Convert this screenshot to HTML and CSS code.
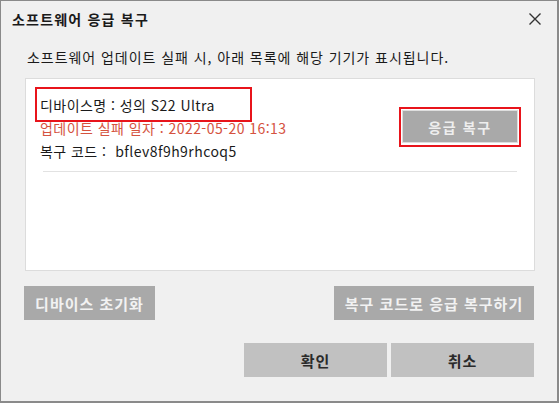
FILE: index.html
```html
<!DOCTYPE html>
<html lang="ko">
<head>
<meta charset="utf-8">
<link rel="stylesheet" href="styles.css">
</head>
<body>
<div class="window">
  <div class="titlebar">
    <span class="title">소프트웨어 응급 복구</span>
    <span class="close">
      <svg width="14" height="14" viewBox="0 0 14 14"><path d="M1.5 1.5 L12.5 12.5 M12.5 1.5 L1.5 12.5" stroke="#333" stroke-width="1.4" fill="none"/></svg>
    </span>
  </div>
  <div class="desc">소프트웨어 업데이트 실패 시, 아래 목록에 해당 기기가 표시됩니다.</div>
  <div class="panel">
    <div class="item">
      <div class="info">
        <div class="row name">디바이스명 : 성의 S22 Ultra</div>
        <div class="row date">업데이트 실패 일자 : 2022-05-20 16:13</div>
        <div class="row code">복구 코드 :&nbsp; bflev8f9h9rhcoq5</div>
      </div>
      <div class="btn-frame">
        <div class="btn recover">응급 복구</div>
      </div>
    </div>
    <div class="sep"></div>
  </div>
  <div class="actions">
    <div class="btn gray reset">디바이스 초기화</div>
    <div class="btn gray code-recover">복구 코드로 응급 복구하기</div>
  </div>
  <div class="footer">
    <div class="btn light">확인</div>
    <div class="btn light">취소</div>
  </div>
</div>
</body>
</html>
```
FILE: styles.css
```css
* { box-sizing: border-box; }
html, body { margin: 0; padding: 0; }
body {
  background: #f0f0f0;
  font-family: "Noto Sans CJK KR", "Noto Sans", sans-serif;
  color: #1a1a1a;
}
.window {
  width: 559px;
  height: 403px;
  border: 1px solid #8a8a8a;
  border-right-width: 2px;
  border-bottom-width: 2px;
  background: #f0f0f0;
  display: flex;
  flex-direction: column;
}
.titlebar {
  height: 36px;
  display: flex;
  align-items: center;
  justify-content: space-between;
  padding: 0 15px 0 11px;
}
.title {
  font-size: 14px;
  font-weight: 700;
  letter-spacing: 1.2px;
}
.close { display: flex; }
.desc {
  margin: 10px 0 0 26px;
  font-size: 14px;
  line-height: 20px;
  letter-spacing: 0.95px;
}
.panel {
  margin: 11px 0 0 24px;
  width: 510px;
  height: 193px;
  background: #fff;
  border: 1px solid #dcdcdc;
  padding: 8px 0 0 9px;
}
.item {
  display: flex;
  justify-content: space-between;
  align-items: flex-start;
  padding-right: 13px;
}
.info { display: flex; flex-direction: column; }
.row {
  font-size: 14px;
  line-height: 23px;
  padding-left: 3px;
  letter-spacing: 0.45px;
}
.name {
  width: 217px;
  height: 35px;
  border: 2px solid #e8141b;
  display: flex;
  align-items: center;
  padding-top: 1px;
  margin-bottom: -5px;
}
.date { color: #d5533f; padding-left: 5px; }
.code { padding-left: 5px; }
.btn-frame {
  margin-top: 20px;
  width: 122px;
  height: 40px;
  border: 2px solid #e8141b;
  padding: 1px 1px 2px 1px;
}
.btn {
  display: flex;
  align-items: center;
  justify-content: center;
  font-size: 14px;
  font-weight: 700;
}
.recover {
  width: 100%;
  height: 100%;
  background: #a9a9a9;
  border: 1px solid #dedede;
  color: #eeeeee;
  letter-spacing: 1.6px;
}
.sep {
  margin: 8px 0 0 8px;
  width: 474px;
  height: 1px;
  background: #e2e2e2;
}
.actions {
  margin: 15px 0 0 23px;
  width: 510px;
  display: flex;
  justify-content: space-between;
}
.gray {
  height: 34px;
  background: #a9a9a9;
  color: #f2f2f2;
  font-size: 15px;
  letter-spacing: 1px;
}
.reset { width: 131px; }
.code-recover { width: 200px; }
.footer {
  margin: 23px 0 0 243px;
  display: flex;
  gap: 4px;
}
.light {
  width: 143px;
  height: 34px;
  background: #c1c1c1;
  color: #2a2a2a;
  font-size: 15px;
  letter-spacing: 1px;
}
```
